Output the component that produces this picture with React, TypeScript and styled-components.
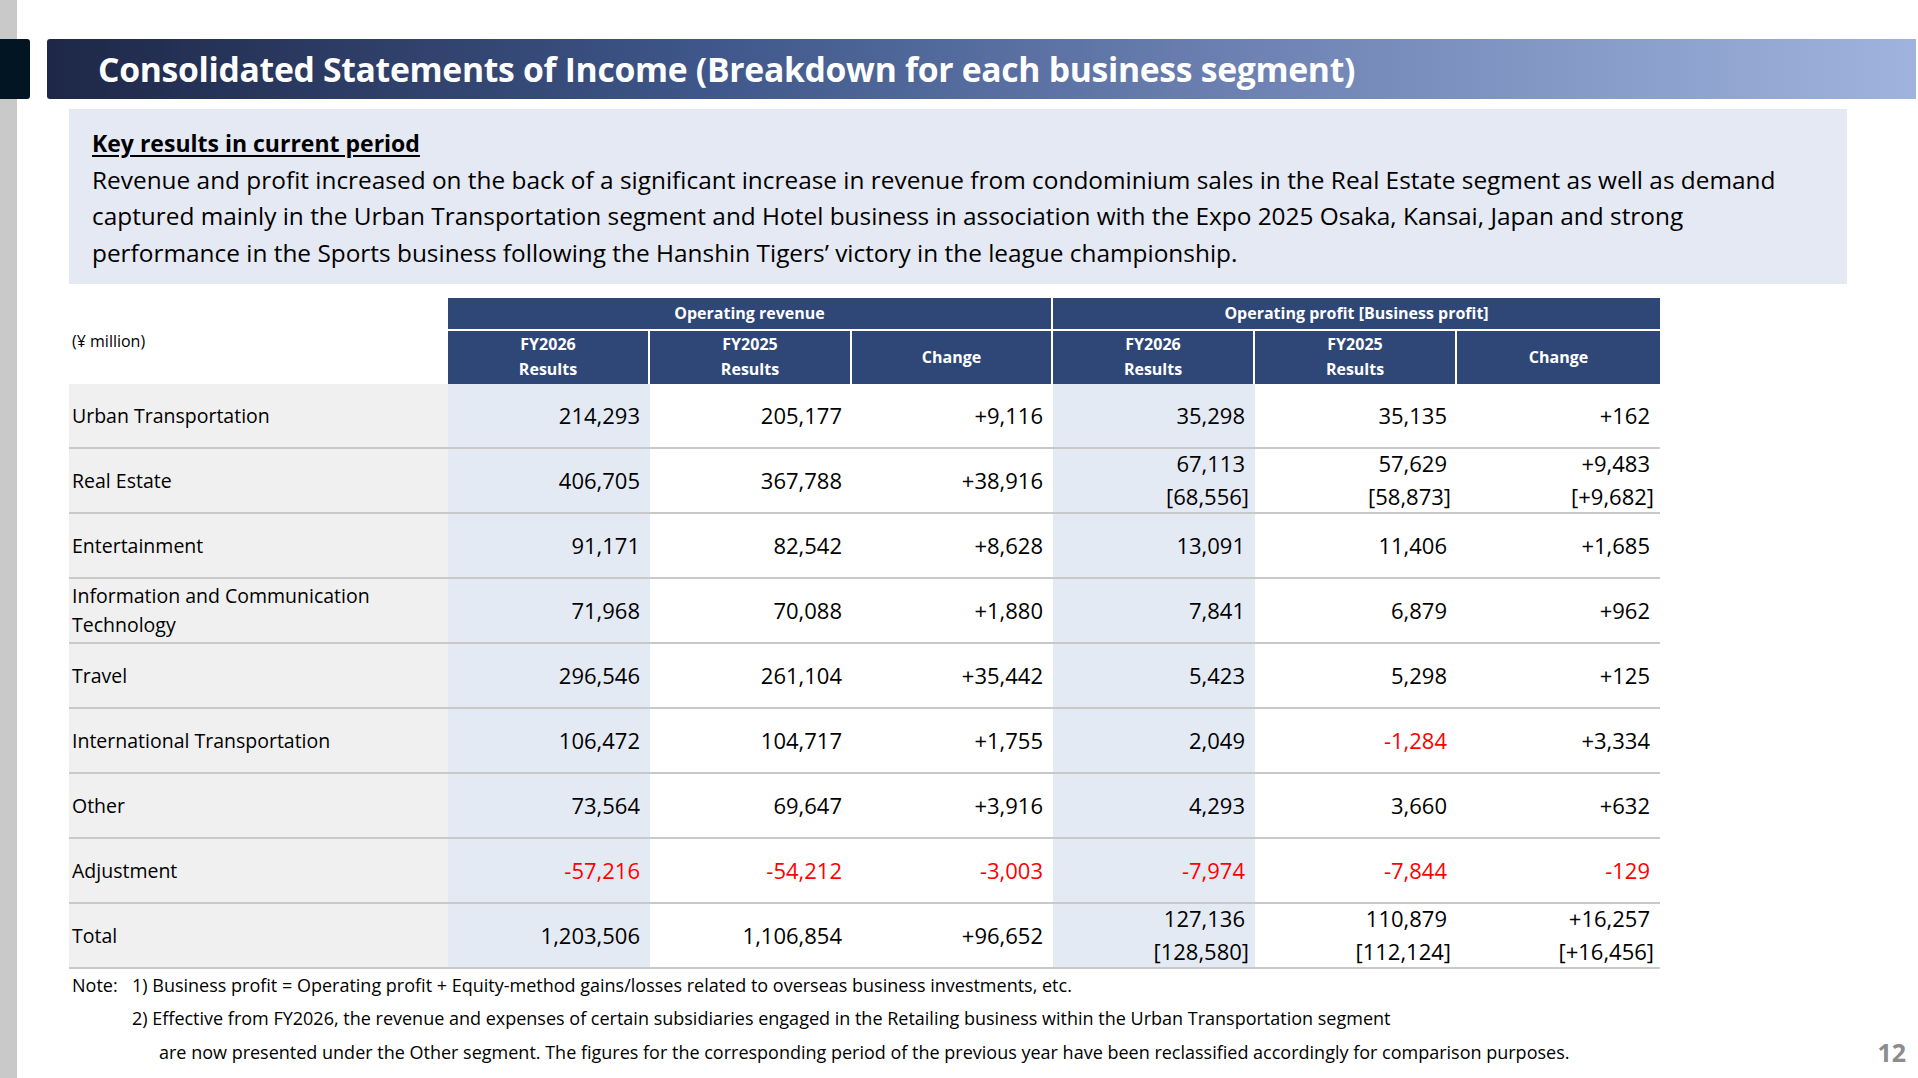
import React from "react";
import styled, { createGlobalStyle } from "styled-components";

const Global = createGlobalStyle`
  html, body {
    margin: 0;
    padding: 0;
    background: linear-gradient(to right, #c9c9c9 17px, #ffffff 17px);
    font-family: "Open Sans", "Noto Sans", sans-serif;
    color: #000;
  }
`;

const Page = styled.div`
  width: 1918px;
  height: 1078px;
  padding-top: 39px;
  box-sizing: border-box;
  display: flex;
  flex-direction: column;
`;

const HeaderRow = styled.div`
  display: flex;
  height: 60px;
  gap: 17px;
  padding-right: 2px;
`;

const Tab = styled.div`
  width: 30px;
  background: #021522;
  border-radius: 0 3px 3px 0;
`;

const TitleBar = styled.div`
  flex: 1;
  display: flex;
  align-items: center;
  padding-left: 51px;
  border-radius: 3px 0 0 3px;
  background: linear-gradient(
    90deg,
    #1e2747 0%,
    #3e5689 35%,
    #6a7fb0 62%,
    #a0b3de 100%
  );
`;

const Title = styled.h1`
  margin: 0;
  color: #fff;
  font-size: 33.7px;
  font-weight: 700;
  letter-spacing: -0.3px;
  white-space: nowrap;
`;

const KeyBox = styled.section`
  margin: 10px 71px 0 69px;
  padding: 16px 23px 12px;
  background: #e4e9f3;
  font-size: 24.4px;
  line-height: 36.7px;
`;

const KeyHead = styled.div`
  font-size: 23px;
  font-weight: 700;
  text-decoration: underline;
  text-underline-offset: 3px;
`;

const KeyText = styled.p`
  margin: 0;
`;

const Table = styled.table`
  margin: 14px 0 0 69px;
  border-collapse: separate;
  border-spacing: 0;
  table-layout: fixed;
  width: 1591px;
`;

const UnitCell = styled.th`
  text-align: left;
  font-weight: 400;
  font-size: 16px;
  padding: 0 0 0 3px;
  vertical-align: middle;
`;

const HeadCell = styled.th<{ $last?: boolean; $tall?: boolean }>`
  background: #2f4777;
  color: #fff;
  font-weight: 700;
  font-size: 16px;
  line-height: 25px;
  padding: 0;
  text-align: center;
  vertical-align: middle;
  border-right: ${(p) => (p.$last ? "none" : "2px solid #fff")};
  border-bottom: ${(p) => (p.$tall ? "none" : "2px solid #fff")};
`;

const HeadRow = styled.tr<{ $h: number }>`
  height: ${(p) => p.$h}px;
`;

const BodyRow = styled.tr`
  height: 65px;
`;

const LabelCell = styled.td`
  background: #f0f0f0;
  font-size: 19.5px;
  line-height: 29px;
  padding: 0 10px 0 3px;
  border-bottom: 2px solid #c9c9c9;
  vertical-align: middle;
`;

const NumCell = styled.td<{ $tint?: boolean; $neg?: boolean }>`
  height: 63px;
  box-sizing: border-box;
  background: ${(p) => (p.$tint ? "#e4eaf3" : "#fff")};
  color: ${(p) => (p.$neg ? "#ff0000" : "#000")};
  font-size: 22px;
  line-height: 30px;
  text-align: right;
  padding: 0 10px 0 0;
  border-bottom: 2px solid #c9c9c9;
  vertical-align: middle;
`;

/* two-line figure: 33px pitch, allowed to overflow the 63px cell evenly */
const Stack = styled.div`
  height: 60px;
  display: flex;
  flex-direction: column;
  justify-content: center;
  line-height: 33px;
`;

const Bracket = styled.div`
  margin-right: -4px;
`;

const Footer = styled.div`
  display: flex;
  align-items: flex-end;
  padding: 0 12px 0 72px;
`;

const Notes = styled.div`
  flex: 1;
  font-size: 18px;
  line-height: 33.5px;
`;

const NoteLine = styled.div<{ $indent: number }>`
  display: flex;
  padding-left: ${(p) => p.$indent}px;
`;

const NoteTag = styled.span`
  width: 60px;
`;

const PageNum = styled.div`
  color: #8c8c8c;
  font-size: 25px;
  font-weight: 700;
  line-height: 33px;
`;

type Val = string | [string, string];

const rows: { label: string; vals: Val[] }[] = [
  { label: "Urban Transportation", vals: ["214,293", "205,177", "+9,116", "35,298", "35,135", "+162"] },
  {
    label: "Real Estate",
    vals: ["406,705", "367,788", "+38,916", ["67,113", "[68,556]"], ["57,629", "[58,873]"], ["+9,483", "[+9,682]"]],
  },
  { label: "Entertainment", vals: ["91,171", "82,542", "+8,628", "13,091", "11,406", "+1,685"] },
  {
    label: "Information and Communication Technology",
    vals: ["71,968", "70,088", "+1,880", "7,841", "6,879", "+962"],
  },
  { label: "Travel", vals: ["296,546", "261,104", "+35,442", "5,423", "5,298", "+125"] },
  { label: "International Transportation", vals: ["106,472", "104,717", "+1,755", "2,049", "-1,284", "+3,334"] },
  { label: "Other", vals: ["73,564", "69,647", "+3,916", "4,293", "3,660", "+632"] },
  { label: "Adjustment", vals: ["-57,216", "-54,212", "-3,003", "-7,974", "-7,844", "-129"] },
  {
    label: "Total",
    vals: ["1,203,506", "1,106,854", "+96,652", ["127,136", "[128,580]"], ["110,879", "[112,124]"], ["+16,257", "[+16,456]"]],
  },
];

const isNeg = (v: Val) => (typeof v === "string" ? v : v[0]).startsWith("-");

export default function App() {
  return (
    <>
      <Global />
      <Page>
        <HeaderRow>
          <Tab />
          <TitleBar>
            <Title>Consolidated Statements of Income (Breakdown for each business segment)</Title>
          </TitleBar>
        </HeaderRow>

        <KeyBox>
          <KeyHead>Key results in current period</KeyHead>
          <KeyText>
            Revenue and profit increased on the back of a significant increase in revenue from condominium sales in
            the Real Estate segment as well as demand
            <br />
            captured mainly in the Urban Transportation segment and Hotel business in association with the Expo 2025
            Osaka, Kansai, Japan and strong
            <br />
            performance in the Sports business following the Hanshin Tigers’ victory in the league championship.
          </KeyText>
        </KeyBox>

        <Table>
          <colgroup>
            <col style={{ width: 379 }} />
            <col style={{ width: 202 }} />
            <col style={{ width: 202 }} />
            <col style={{ width: 201 }} />
            <col style={{ width: 202 }} />
            <col style={{ width: 202 }} />
            <col style={{ width: 203 }} />
          </colgroup>
          <thead>
            <HeadRow $h={33}>
              <UnitCell rowSpan={2}>(¥ million)</UnitCell>
              <HeadCell colSpan={3}>Operating revenue</HeadCell>
              <HeadCell colSpan={3} $last>
                Operating profit [Business profit]
              </HeadCell>
            </HeadRow>
            <HeadRow $h={53}>
              <HeadCell $tall>
                FY2026
                <br />
                Results
              </HeadCell>
              <HeadCell $tall>
                FY2025
                <br />
                Results
              </HeadCell>
              <HeadCell $tall>Change</HeadCell>
              <HeadCell $tall>
                FY2026
                <br />
                Results
              </HeadCell>
              <HeadCell $tall>
                FY2025
                <br />
                Results
              </HeadCell>
              <HeadCell $tall $last>
                Change
              </HeadCell>
            </HeadRow>
          </thead>
          <tbody>
            {rows.map((r) => (
              <BodyRow key={r.label}>
                <LabelCell>{r.label}</LabelCell>
                {r.vals.map((v, i) => (
                  <NumCell key={i} $tint={i === 0 || i === 3} $neg={isNeg(v)}>
                    {typeof v === "string" ? (
                      v
                    ) : (
                      <Stack>
                        <div>{v[0]}</div>
                        <Bracket>{v[1]}</Bracket>
                      </Stack>
                    )}
                  </NumCell>
                ))}
              </BodyRow>
            ))}
          </tbody>
        </Table>

        <Footer>
          <Notes>
            <NoteLine $indent={0}>
              <NoteTag>Note:</NoteTag>
              <span>
                1) Business profit = Operating profit + Equity-method gains/losses related to overseas business
                investments, etc.
              </span>
            </NoteLine>
            <NoteLine $indent={60}>
              2) Effective from FY2026, the revenue and expenses of certain subsidiaries engaged in the Retailing
              business within the Urban Transportation segment
            </NoteLine>
            <NoteLine $indent={87}>
              are now presented under the Other segment. The figures for the corresponding period of the previous year
              have been reclassified accordingly for comparison purposes.
            </NoteLine>
          </Notes>
          <PageNum>12</PageNum>
        </Footer>
      </Page>
    </>
  );
}
